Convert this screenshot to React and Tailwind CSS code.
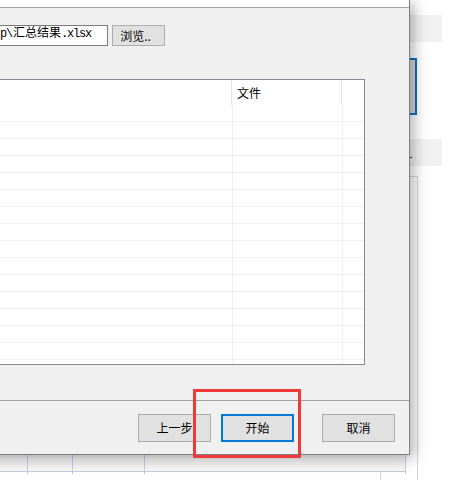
const rows = Array.from({ length: 16 });

const Btn = ({ children, primary }) => (
  <button
    className={
      primary
        ? "w-[73px] h-[28px] bg-[#e1e1e1] border-2 border-[#0078d7] text-[12px] text-black"
        : "w-[73px] h-[28px] bg-[#e1e1e1] border border-[#adadad] text-[12px] text-black"
    }
  >
    {children}
  </button>
);

export default function App() {
  return (
    <div
      className="relative w-[468px] h-[480px] overflow-hidden bg-white"
      style={{ fontFamily: '"Noto Sans CJK SC", "Liberation Sans", sans-serif' }}
    >
      {/* window behind the dialog */}
      <div className="absolute left-[380px] top-[15px] w-[62px] h-[27px] bg-[#f2f2f2]" />
      <div className="absolute left-[380px] top-[58px] w-[37px] h-[57px] border-2 border-[#0a6fc2] bg-[#d8d8d8]" />
      <div className="absolute left-[380px] top-[139px] w-[62px] h-[27px] bg-[#f2f2f2]" />
      <div className="absolute left-[409px] top-[157px] w-[3px] h-[1px] bg-[#8b1010]" />
      <div className="absolute left-[380px] top-[176px] w-[38px] h-[400px] border border-[#d4d4d4]" />
      <div className="absolute left-0 top-[454px] w-[406px] h-[18px] border-b border-[#c6cbdc] bg-[#f7f7f7]" />
      <div className="absolute left-[27px] top-[454px] w-px h-[20px] bg-[#c6cbdc]" />
      <div className="absolute left-[72px] top-[454px] w-px h-[20px] bg-[#c6cbdc]" />
      <div className="absolute left-[144px] top-[454px] w-px h-[20px] bg-[#c6cbdc]" />
      <div className="absolute left-[405px] top-[454px] w-px h-[20px] bg-[#c6cbdc]" />

      {/* dialog */}
      <div className="absolute left-[-200px] top-0 w-[610px] h-[455px] flex flex-col bg-[#f0f0f0] border-r border-b border-[#7f7f7f] shadow-[3px_3px_14px_rgba(0,0,0,0.35)]">
        <div className="h-[8px] bg-white border-b border-[#a0a0a0]" />

        <div className="flex flex-col pl-[50px] pr-[44px] pt-[17px] pb-[35px]">
          <div className="flex items-center h-[21px]">
            <div
              className="w-[258px] h-[21px] flex items-center justify-end overflow-hidden whitespace-nowrap bg-white border border-[#7a7a7a] pr-[16px] pb-[3px] text-[12px] text-black"
              style={{ fontFamily: '"Liberation Mono", "Noto Sans CJK SC", monospace' }}
            >
              <span className="tracking-[-1.2px] mr-[1px]">p\</span>
              <span>汇总结果</span>
              <span className="tracking-[-1.2px]">.xlsx</span>
            </div>
            <button className="ml-[4px] w-[53px] h-[21px] bg-[#e1e1e1] border border-[#adadad] text-[12px] text-black pr-[6px] leading-none">
              浏览..
            </button>
          </div>

          <div className="mt-[33px] h-[286px] bg-white border border-[#828790] overflow-hidden flex flex-col">
            <div className="flex h-[25px] shrink-0 text-[12px] text-black">
              <div className="w-[381px] border-r border-[#e5e5e5]" />
              <div className="w-[110px] border-r border-[#e5e5e5] pl-[5px] pt-[4px]">文件</div>
              <div className="flex-1" />
            </div>
            {rows.map((_, i) => (
              <div key={i} className="flex h-[17px] shrink-0 border-b border-[#f0f0f0]">
                <div className="w-[382px] border-r border-[#f0f0f0]" />
                <div className="w-[110px] border-r border-[#f0f0f0]" />
                <div className="flex-1" />
              </div>
            ))}
          </div>
        </div>

        <div className="flex-1 border-t border-[#a0a0a0] flex justify-end items-start pt-[13px] pr-[14px]">
          <Btn>上一步</Btn>
          <div className="ml-[10px]">
            <Btn primary>开始</Btn>
          </div>
          <div className="ml-[28px]">
            <Btn>取消</Btn>
          </div>
        </div>
      </div>

      {/* annotation */}
      <div className="absolute left-[193px] top-[389px] w-[108px] h-[69px] border-[3px] border-[#f03a3a]" />
    </div>
  );
}
